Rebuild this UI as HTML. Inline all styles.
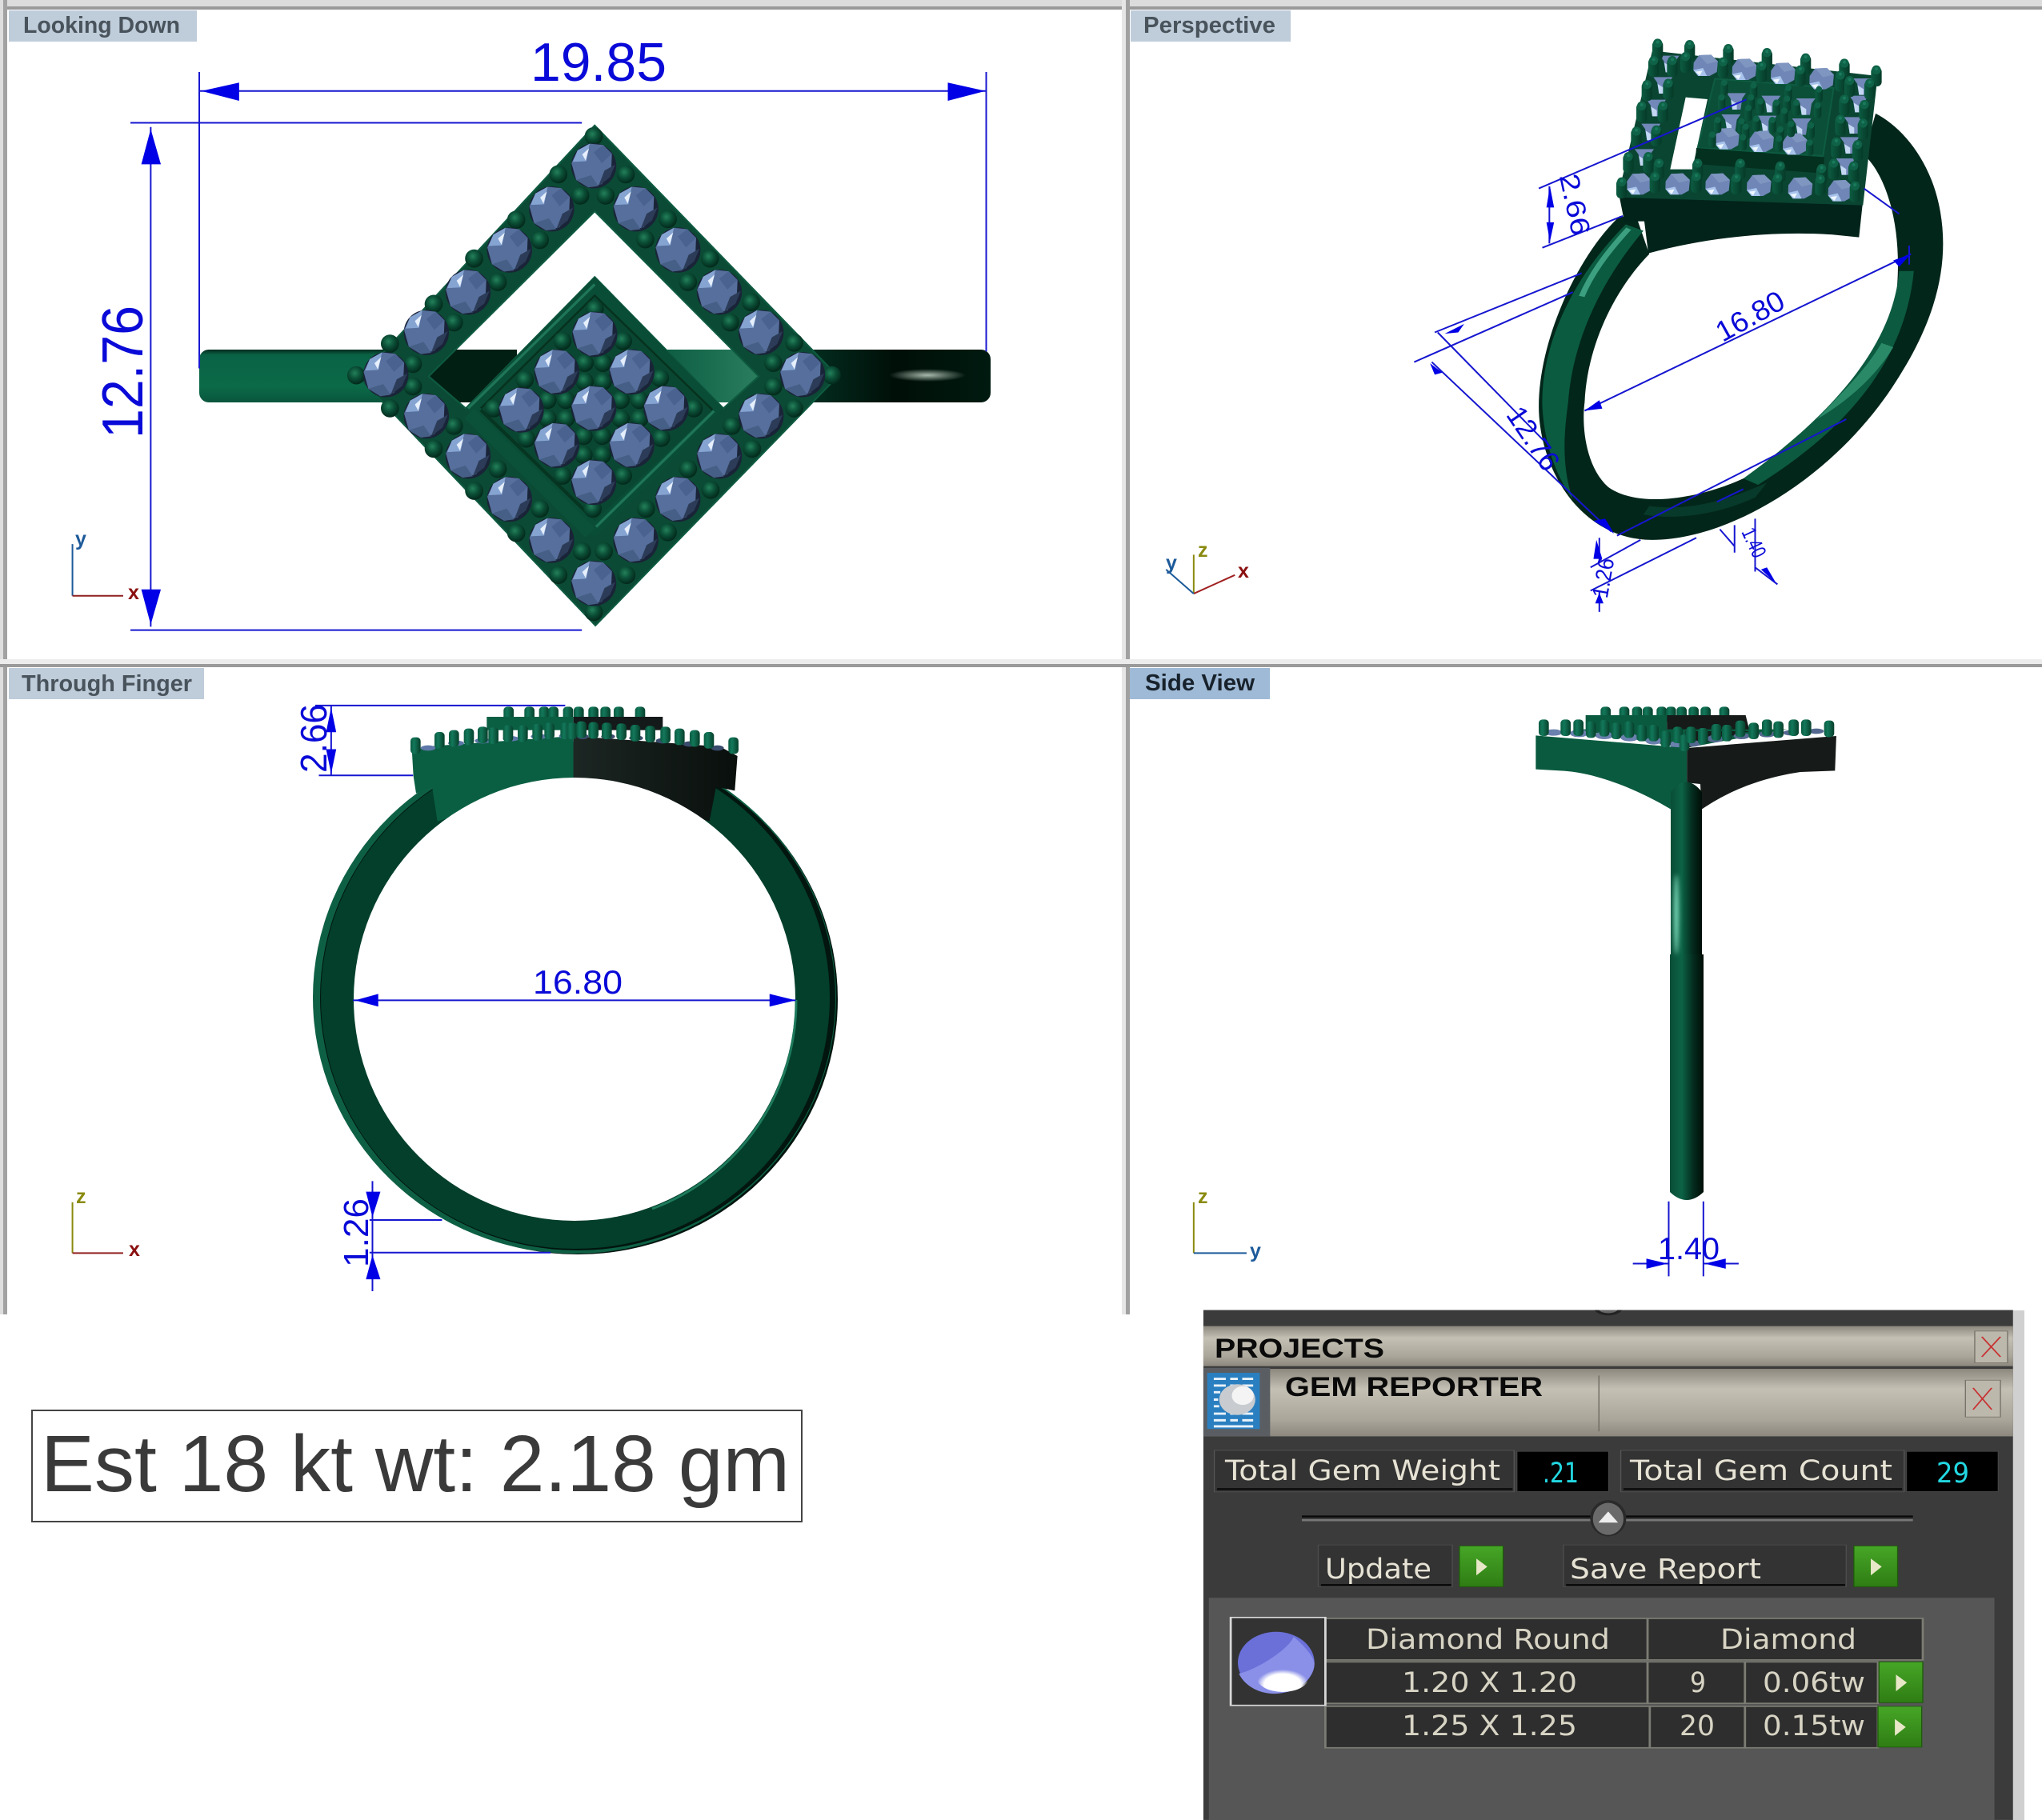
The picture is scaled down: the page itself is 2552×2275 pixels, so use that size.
<!DOCTYPE html>
<html><head><meta charset="utf-8"><title>Ring report</title>
<style>
html,body{margin:0;padding:0;background:#fff}
svg{display:block}
.d line,.d path,.d polyline{stroke:#1616d0;stroke-width:2;fill:none;vector-effect:non-scaling-stroke}
.d polygon{fill:#0000e6}
text{font-family:"Liberation Sans",sans-serif}
.dv{font-family:"DejaVu Sans","Liberation Sans",sans-serif;font-size:35px;fill:#e6e2d4}
.lb{font-weight:700;font-size:29px}
.dm{fill:#0a0ad8}
.ax{font-weight:700;font-size:25px}
</style></head><body>
<svg xmlns="http://www.w3.org/2000/svg" width="2552" height="2275" viewBox="0 0 2552 2275">
<defs>
<filter id="bl3" x="-200%" y="-20%" width="500%" height="140%"><feGaussianBlur stdDeviation="3"/></filter>
<radialGradient id="sph" cx=".42" cy=".38" r=".62"><stop offset="0" stop-color="#23805a"/><stop offset=".5" stop-color="#0b4f37"/><stop offset="1" stop-color="#03291b"/></radialGradient>
<linearGradient id="bl" x1="0" y1="0" x2="0" y2="1"><stop offset="0" stop-color="#032a1c"/><stop offset=".1" stop-color="#0a6245"/><stop offset=".7" stop-color="#0b6a48"/><stop offset="1" stop-color="#0a563c"/></linearGradient>
<linearGradient id="bh" x1="0" y1="0" x2="1" y2="0"><stop offset="0" stop-color="#0a5a40"/><stop offset="1" stop-color="#2c8060"/></linearGradient>
<linearGradient id="br" x1="0" y1="0" x2="1" y2="0"><stop offset="0" stop-color="#043022"/><stop offset=".5" stop-color="#000f08"/><stop offset="1" stop-color="#001a10"/></linearGradient>
<radialGradient id="hl"><stop offset="0" stop-color="#a8b8ac"/><stop offset="1" stop-color="#a8b8ac" stop-opacity="0"/></radialGradient>
<linearGradient id="sh" x1="0" y1="0" x2="1" y2="0"><stop offset="0" stop-color="#0a4d37"/><stop offset=".35" stop-color="#0c6346"/><stop offset=".7" stop-color="#042b1d"/><stop offset="1" stop-color="#000d07"/></linearGradient>
<linearGradient id="dk" x1="0" y1="0" x2="1" y2="0"><stop offset="0" stop-color="#1c2623"/><stop offset="1" stop-color="#090f0c"/></linearGradient>
<linearGradient id="gb" x1="0" y1="0" x2="0" y2="1"><stop offset="0" stop-color="#46a626"/><stop offset="1" stop-color="#2f7d14"/></linearGradient>
<linearGradient id="tb" x1="0" y1="0" x2="0" y2="1"><stop offset="0" stop-color="#8c887e"/><stop offset=".3" stop-color="#c4c0b4"/><stop offset=".75" stop-color="#aaa69a"/><stop offset="1" stop-color="#8c887e"/></linearGradient>
<radialGradient id="pe" cx=".5" cy=".75" r=".5"><stop offset="0" stop-color="#fff"/><stop offset=".7" stop-color="#fff"/><stop offset="1" stop-color="#fff" stop-opacity="0"/></radialGradient>
<linearGradient id="pv" x1="0" y1="0" x2="1" y2="0"><stop offset="0" stop-color="#0a5a40"/><stop offset=".35" stop-color="#13785a"/><stop offset="1" stop-color="#073f2b"/></linearGradient>
<linearGradient id="pw" x1="0" y1="0" x2="1" y2="0"><stop offset="0" stop-color="#0d5c42"/><stop offset="1" stop-color="#053a28"/></linearGradient>
<g id="gem">
<circle r="67" fill="#1a2438"/>
<polygon points="-66,-8 -48,-46 -12,-66 28,-62 54,-36 52,12 24,54 -16,64 -52,42" fill="#566f9c"/>
<polygon points="-12,-66 -48,-46 -62,-12 -22,-14" fill="#86a4d2"/>
<polygon points="-34,-34 -14,-52 -24,-16" fill="#e6effc"/>
<polygon points="28,-62 54,-36 24,-8 0,-40" fill="#4a6290"/>
<polygon points="-52,42 -16,64 14,60 -8,28" fill="#465f86"/>
<polygon points="14,60 48,34 64,-4 32,14" fill="#2c3c58"/>
</g>
<g id="pr"><circle r="27" fill="url(#sph)"/></g>
<g id="gz"><polygon points="-45,-10 -25,-38 20,-40 46,-15 42,25 15,40 -28,40 -46,18" fill="#6f86b6"/><polygon points="-25,-38 20,-40 46,-15 5,-5" fill="#7f96c0"/><polygon points="-46,18 -28,40 5,40 -10,10" fill="#a8c4ec"/><polygon points="-38,24 -22,38 -12,20" fill="#eef7ff"/></g>
<g id="gc"><polygon points="-36,-26 36,-26 22,-6 16,36 -15,36 -22,-6" fill="#7288b8"/><polygon points="-15,36 -20,0 2,14 2,36" fill="#c4d8f4"/></g>
<g id="pz"><rect x="-20" y="-18" width="40" height="72" rx="17" fill="url(#pw)"/><circle cy="-8" r="17" fill="#0f6247"/><circle cy="-12" r="6" fill="#1a7a5c"/></g>
<g id="pi"><rect x="-14" y="-12" width="28" height="56" rx="12" fill="url(#pw)"/><circle cy="-5" r="12" fill="#0f6247"/></g>
<g id="p3"><rect x="-19" y="-10" width="38" height="62" rx="14" fill="url(#pv)"/></g>
<g id="bt"><rect width="80" height="122" fill="url(#gb)"/><rect width="80" height="122" fill="none" stroke="#1f5a0c" stroke-width="2"/><polygon points="31,38 31,88 51,62" fill="#e8e8c8"/></g>
</defs>
<rect width="2552" height="2275" fill="#fff"/>

<!-- frames -->
<rect width="2552" height="8" fill="#dcdcdc"/><rect y="8" width="2552" height="4" fill="#9a9a9a"/>
<rect width="4" height="1643" fill="#dedede"/><rect x="4" width="5" height="1643" fill="#a2a2a2"/>
<rect x="1402" width="5" height="1643" fill="#e6e6e6"/><rect x="1407" width="5" height="1643" fill="#a0a0a0"/>
<rect y="824" width="2552" height="6" fill="#ececec"/><rect y="830" width="2552" height="4" fill="#9a9a9a"/>

<!-- labels -->
<rect x="11" y="13" width="235" height="39" fill="#bfccd9"/>
<text class="lb" x="29" y="41" textLength="196" lengthAdjust="spacingAndGlyphs" fill="#48535c">Looking Down</text>
<rect x="1413" y="13" width="200" height="39" fill="#bfccd9"/>
<text class="lb" x="1429" y="41" textLength="165" lengthAdjust="spacingAndGlyphs" fill="#48535c">Perspective</text>
<rect x="11" y="835" width="244" height="39" fill="#bfccd9"/>
<text class="lb" x="27" y="864" textLength="213" lengthAdjust="spacingAndGlyphs" fill="#48535c">Through Finger</text>
<rect x="1412" y="835" width="175" height="39" fill="#9fbad6"/>
<text class="lb" x="1431" y="863" textLength="137" lengthAdjust="spacingAndGlyphs" fill="#18222c">Side View</text>

<!-- PANEL 1 band -->
<rect x="249" y="437" width="300" height="66" rx="12" fill="url(#bl)"/>
<rect x="536" y="437" width="110" height="66" fill="#021f14"/>
<rect x="820" y="437" width="135" height="66" fill="url(#bh)"/>
<rect x="1000" y="437" width="238" height="66" rx="12" fill="url(#br)"/>
<ellipse cx="1159" cy="469" rx="48" ry="8" fill="url(#hl)"/>

<!-- PANEL 1 head -->
<g transform="translate(420 140) scale(.4209)">
<path fill-rule="evenodd" fill="#0b4a34" stroke="#0e5a40" stroke-width="5" d="M768 40L1490 785L770 1525L70 790ZM768 295L275 785L385 880L768 490L1150 880L1255 785Z"/>
<polygon points="768,490 1150,880 768,1265 385,880" fill="#0a4d36"/>
<polygon points="768,545 1118,885 768,1215 430,880" fill="#0a4732"/>
<path d="M392 880L768 512M1122 888L772 1232" stroke="#1f7557" stroke-width="8" fill="none"/>
<path d="M430 880L768 545L1118 885" stroke="#06321f" stroke-width="6" fill="none"/>
<path d="M430 885L750 1195" stroke="#063522" stroke-width="10" fill="none"/>
<path d="M395 895L755 1250" stroke="#0b5039" stroke-width="40" fill="none"/>
<g>
<use href="#pr" x="765" y="72"/><use href="#pr" x="660" y="185"/><use href="#pr" x="860" y="185"/><use href="#pr" x="725" y="248"/><use href="#pr" x="800" y="248"/>
<use href="#pr" x="535" y="320"/><use href="#pr" x="985" y="318"/><use href="#pr" x="605" y="380"/><use href="#pr" x="918" y="378"/>
<use href="#pr" x="410" y="435"/><use href="#pr" x="1110" y="435"/><use href="#pr" x="480" y="505"/><use href="#pr" x="1045" y="505"/>
<use href="#pr" x="290" y="570"/><use href="#pr" x="1232" y="565"/><use href="#pr" x="350" y="625"/><use href="#pr" x="1170" y="625"/>
<use href="#pr" x="160" y="688"/><use href="#pr" x="1360" y="685"/><use href="#pr" x="228" y="748"/><use href="#pr" x="1298" y="745"/>
<use href="#pr" x="60" y="782"/><use href="#pr" x="1472" y="782"/><use href="#pr" x="228" y="815"/><use href="#pr" x="1298" y="815"/>
<use href="#pr" x="160" y="880"/><use href="#pr" x="1360" y="880"/><use href="#pr" x="350" y="932"/><use href="#pr" x="1175" y="932"/>
<use href="#pr" x="290" y="1000"/><use href="#pr" x="1235" y="1000"/><use href="#pr" x="480" y="1060"/><use href="#pr" x="1045" y="1060"/>
<use href="#pr" x="410" y="1125"/><use href="#pr" x="1112" y="1122"/><use href="#pr" x="605" y="1178"/><use href="#pr" x="920" y="1178"/>
<use href="#pr" x="535" y="1250"/><use href="#pr" x="985" y="1248"/><use href="#pr" x="730" y="1305"/><use href="#pr" x="795" y="1305"/>
<use href="#pr" x="660" y="1375"/><use href="#pr" x="862" y="1375"/><use href="#pr" x="765" y="1485"/>
<use href="#pr" x="768" y="585"/><use href="#pr" x="672" y="680"/><use href="#pr" x="852" y="680"/><use href="#pr" x="738" y="745"/><use href="#pr" x="792" y="745"/>
<use href="#pr" x="560" y="795"/><use href="#pr" x="962" y="790"/><use href="#pr" x="738" y="800"/><use href="#pr" x="792" y="800"/>
<use href="#pr" x="628" y="855"/><use href="#pr" x="682" y="855"/><use href="#pr" x="845" y="855"/><use href="#pr" x="900" y="855"/>
<use href="#pr" x="468" y="880"/><use href="#pr" x="1062" y="880"/><use href="#pr" x="628" y="910"/><use href="#pr" x="682" y="910"/><use href="#pr" x="845" y="910"/><use href="#pr" x="900" y="910"/>
<use href="#pr" x="565" y="970"/><use href="#pr" x="965" y="968"/><use href="#pr" x="735" y="962"/><use href="#pr" x="790" y="962"/><use href="#pr" x="735" y="1018"/><use href="#pr" x="790" y="1018"/>
<use href="#pr" x="672" y="1080"/><use href="#pr" x="852" y="1080"/><use href="#pr" x="762" y="1178"/>
</g>
<g>
<use href="#gem" x="765" y="160"/><use href="#gem" x="640" y="288"/><use href="#gem" x="890" y="288"/><use href="#gem" x="515" y="410"/><use href="#gem" x="1015" y="410"/>
<use href="#gem" x="392" y="535"/><use href="#gem" x="1138" y="535"/><use href="#gem" x="268" y="655"/><use href="#gem" x="1262" y="655"/><use href="#gem" x="148" y="780"/><use href="#gem" x="1385" y="780"/>
<use href="#gem" x="268" y="903"/><use href="#gem" x="1262" y="903"/><use href="#gem" x="392" y="1022"/><use href="#gem" x="1138" y="1022"/><use href="#gem" x="515" y="1150"/><use href="#gem" x="1015" y="1150"/>
<use href="#gem" x="640" y="1272"/><use href="#gem" x="890" y="1272"/><use href="#gem" x="765" y="1400"/>
<use href="#gem" x="768" y="660"/><use href="#gem" x="655" y="772"/><use href="#gem" x="878" y="772"/><use href="#gem" x="550" y="885"/><use href="#gem" x="765" y="880"/><use href="#gem" x="980" y="880"/>
<use href="#gem" x="655" y="990"/><use href="#gem" x="878" y="990"/><use href="#gem" x="765" y="1100"/>
</g>
</g>

<!-- PANEL 1 dims -->
<g class="d" transform="scale(.9056 .5293)">
<path d="M275 215H1361M275 170V870M1361 170V830M180 290H803M180 1488H803M208 300V1480"/>
<polygon points="278,215 330,195 330,238"/><polygon points="1360,215 1308,195 1308,238"/>
<polygon points="208,305 195,388 222,388"/><polygon points="208,1475 195,1392 222,1392"/>
<path d="M100 1285V1407" style="stroke:#1c5a9a"/><path d="M100 1407H170" style="stroke:#902020"/>
</g>
<text class="dm" x="663" y="101" font-size="68" textLength="170" lengthAdjust="spacingAndGlyphs">19.85</text>
<text class="dm" transform="translate(178 548) rotate(-90)" font-size="72" textLength="166" lengthAdjust="spacingAndGlyphs">12.76</text>
<text class="ax" x="94" y="682" fill="#1d5a9a">y</text>
<text class="ax" x="160" y="749" fill="#8a1010">x</text>

<!-- PANEL 2 ring -->
<g transform="translate(1400 0) scale(.7347 .5293)">
<path fill-rule="evenodd" fill="#03261a" d="M850 510C780 600 712 800 712 960C712 1100 780 1275 905 1275C1040 1275 1220 1120 1320 900C1390 750 1410 620 1395 500C1380 380 1330 300 1285 268L1265 365C1315 430 1340 600 1310 780C1280 920 1170 1060 1060 1130C980 1180 880 1200 830 1150C790 1100 785 1000 790 950C795 800 850 670 900 600L880 520Z"/>
<path fill="#0b5b40" d="M860 530C780 640 715 800 718 960C722 1060 745 1130 770 1180C750 1100 755 1020 762 950C770 800 820 660 890 545Z"/>
<path d="M865 540C825 600 800 650 785 700" stroke="#3c9f80" stroke-width="10" fill="none"/>
<path fill="#0c5a40" d="M1325 640C1315 800 1230 960 1060 1130L1085 1145C1240 1010 1335 850 1350 640Z"/>
<path fill="#2a8a68" d="M1295 810C1265 880 1225 930 1185 990C1235 950 1285 890 1315 820Z"/>
<path fill="#073a2a" d="M900 1195C980 1210 1050 1170 1100 1140L1080 1175C1000 1225 930 1225 890 1215Z"/>
</g>
<!-- PANEL 2 head -->
<g transform="translate(2000 30) scale(.3333)">
<path fill="#02231a" d="M70 640L985 660L970 800L870 790C650 775 400 800 180 860L165 740L90 740Z"/>
<path fill-rule="evenodd" fill="#0a4532" d="M195 100L1040 195L985 680L65 650ZM320 275L402 282L345 545L262 545Z"/>
<polygon points="430,205 875,240 835,495 365,465" fill="#0b4f38" stroke="#0e5c42" stroke-width="6"/>
<polygon points="360,465 840,500 835,560 355,525" fill="#04301f"/>
<g>
<use href="#gc" x="260" y="145"/><use href="#gz" x="395" y="155"/><use href="#gz" x="540" y="170"/><use href="#gz" x="685" y="185"/><use href="#gz" x="830" y="205"/><use href="#gc" x="985" y="230"/>
<use href="#gc" x="235" y="225"/><use href="#gc" x="210" y="310"/><use href="#gc" x="190" y="400"/><use href="#gc" x="165" y="495"/>
<use href="#gc" x="970" y="295"/><use href="#gc" x="950" y="375"/><use href="#gc" x="935" y="450"/><use href="#gc" x="920" y="530"/>
<use href="#gc" x="510" y="285"/><use href="#gc" x="640" y="295"/><use href="#gc" x="770" y="305"/><use href="#gc" x="490" y="365"/><use href="#gc" x="625" y="370"/><use href="#gc" x="755" y="380"/><use href="#gz" x="475" y="430"/><use href="#gz" x="605" y="440"/><use href="#gz" x="730" y="450"/>
<use href="#gz" x="145" y="600"/><use href="#gz" x="290" y="600"/><use href="#gz" x="440" y="600"/><use href="#gz" x="595" y="605"/><use href="#gz" x="750" y="615"/><use href="#gz" x="900" y="625"/>
</g>
<g>
<use href="#pi" x="465" y="225"/><use href="#pi" x="575" y="235"/><use href="#pi" x="705" y="245"/><use href="#pi" x="820" y="250"/>
<use href="#pi" x="455" y="280"/><use href="#pi" x="565" y="280"/><use href="#pi" x="700" y="285"/><use href="#pi" x="600" y="295"/><use href="#pi" x="660" y="300"/><use href="#pi" x="735" y="300"/><use href="#pi" x="815" y="310"/>
<use href="#pi" x="555" y="320"/><use href="#pi" x="690" y="330"/><use href="#pi" x="440" y="365"/><use href="#pi" x="530" y="370"/><use href="#pi" x="585" y="360"/><use href="#pi" x="645" y="365"/><use href="#pi" x="715" y="380"/><use href="#pi" x="790" y="385"/><use href="#pi" x="545" y="390"/><use href="#pi" x="675" y="400"/><use href="#pi" x="420" y="420"/><use href="#pi" x="535" y="430"/><use href="#pi" x="670" y="435"/><use href="#pi" x="785" y="450"/>
<use href="#pz" x="215" y="80"/><use href="#pz" x="335" y="85"/><use href="#pz" x="480" y="100"/><use href="#pz" x="625" y="115"/><use href="#pz" x="770" y="135"/><use href="#pz" x="915" y="155"/><use href="#pz" x="1035" y="180"/>
<use href="#pz" x="200" y="145"/><use href="#pz" x="270" y="145"/><use href="#pz" x="320" y="130"/><use href="#pz" x="460" y="150"/><use href="#pz" x="605" y="165"/><use href="#pz" x="750" y="180"/><use href="#pz" x="900" y="200"/>
<use href="#pz" x="935" y="220"/><use href="#pz" x="1010" y="230"/><use href="#pz" x="175" y="235"/><use href="#pz" x="255" y="230"/><use href="#pz" x="915" y="290"/><use href="#pz" x="990" y="310"/>
<use href="#pz" x="155" y="315"/><use href="#pz" x="235" y="315"/><use href="#pz" x="900" y="365"/><use href="#pz" x="985" y="380"/><use href="#pz" x="135" y="410"/><use href="#pz" x="210" y="405"/>
<use href="#pz" x="885" y="450"/><use href="#pz" x="965" y="460"/><use href="#pz" x="105" y="505"/><use href="#pz" x="180" y="505"/><use href="#pz" x="220" y="530"/>
<use href="#pz" x="365" y="530"/><use href="#pz" x="525" y="530"/><use href="#pz" x="675" y="540"/><use href="#pz" x="830" y="550"/><use href="#pz" x="875" y="530"/><use href="#pz" x="950" y="540"/>
<use href="#pz" x="80" y="600"/><use href="#pz" x="205" y="580"/><use href="#pz" x="360" y="580"/><use href="#pz" x="510" y="585"/><use href="#pz" x="665" y="585"/><use href="#pz" x="825" y="590"/><use href="#pz" x="955" y="615"/>
</g>
</g>
<g class="d" transform="translate(1400 0) scale(.7347 .5293)">
<path d="M712 445L1065 235M718 585L855 510M730 440V575M1265 445L1325 505"/>
<path d="M535 785L785 645M500 855L770 690M540 785L720 1040M530 855L835 1255"/>
<path d="M790 970L1345 600M1342 580V625"/>
<path d="M845 1265L1235 990M800 1395L980 1270M800 1340L885 1275M1015 1185L1060 1155M815 1270V1330M815 1395V1445M1045 1240V1305M1080 1225V1350M1080 1340L1118 1380M1020 1250L1045 1290"/>
<polygon points="725,490 738,490 731,440"/><polygon points="725,525 738,525 731,570"/>
<polygon points="552,788 585,765 575,785"/><polygon points="527,858 548,880 535,885"/>
<polygon points="790,970 815,945 820,965"/><polygon points="1345,600 1315,615 1325,630"/>
<polygon points="840,1260 805,1230 825,1225"/><polygon points="810,1275 820,1320 805,1320"/><polygon points="815,1400 808,1425 822,1425"/><polygon points="1116,1378 1090,1345 1100,1340"/>
<path d="M125 1402V1310" style="stroke:#8a8a10"/><path d="M125 1402L195 1358" style="stroke:#a02020"/><path d="M125 1402L78 1345" style="stroke:#1c5a9a"/>
</g>
<text class="dm" transform="translate(1957 258) rotate(78)" text-anchor="middle" font-size="34" textLength="78" lengthAdjust="spacingAndGlyphs">2.66</text>
<text class="dm" transform="translate(1906 555) rotate(56)" text-anchor="middle" font-size="36" textLength="88" lengthAdjust="spacingAndGlyphs">12.76</text>
<text class="dm" transform="translate(2193 406) rotate(-29)" text-anchor="middle" font-size="36" textLength="92" lengthAdjust="spacingAndGlyphs">16.80</text>
<text class="dm" transform="translate(2013 724) rotate(-80)" text-anchor="middle" font-size="28" textLength="50" lengthAdjust="spacingAndGlyphs">1.26</text>
<text class="dm" transform="translate(2184 682) rotate(65)" text-anchor="middle" font-size="26" textLength="38" lengthAdjust="spacingAndGlyphs">1.40</text>
<text class="ax" x="1497" y="696" fill="#8a8a10">z</text>
<text class="ax" x="1547" y="722" fill="#8a1010">x</text>
<text class="ax" x="1457" y="712" fill="#1d5a9a">y</text>

<!-- PANEL 3 ring -->
<ellipse cx="722" cy="1249" rx="325" ry="319" fill="#01150d"/>
<ellipse cx="718" cy="1247" rx="327" ry="320" fill="#0e6045"/>
<ellipse cx="722" cy="1247" rx="322" ry="316" fill="#02150e"/>
<ellipse cx="719" cy="1247" rx="318" ry="314" fill="#033f2b"/>
<!-- PANEL 3 head -->
<g transform="translate(490 870) scale(.3333)">
<use href="#p3" x="437" y="50"/><use href="#p3" x="515" y="50"/><use href="#p3" x="570" y="50"/><use href="#p3" x="605" y="50"/><use href="#p3" x="660" y="50"/><use href="#p3" x="700" y="50"/><use href="#p3" x="755" y="50"/><use href="#p3" x="800" y="50"/><use href="#p3" x="850" y="50"/><use href="#p3" x="930" y="50"/>
<rect x="355" y="78" width="325" height="50" fill="#0a5f43"/><rect x="680" y="78" width="335" height="50" fill="#14191a"/>
<polygon points="75,215 120,190 680,150 680,320 170,470 150,340 90,365 80,300" fill="#0a5f43"/>
<polygon points="680,150 1230,190 1295,225 1285,355 1215,340 1190,470 680,320" fill="url(#dk)"/>
<g fill="#5f78aa"><ellipse cx="135" cy="195" rx="28" ry="10"/><ellipse cx="240" cy="177" rx="30" ry="10"/><ellipse cx="340" cy="168" rx="30" ry="10"/><ellipse cx="445" cy="160" rx="30" ry="10"/><ellipse cx="550" cy="152" rx="30" ry="10"/><ellipse cx="650" cy="150" rx="24" ry="10"/></g>
<g fill="#3a4c6c"><ellipse cx="715" cy="152" rx="22" ry="10"/><ellipse cx="810" cy="152" rx="26" ry="10"/><ellipse cx="915" cy="158" rx="26" ry="10"/><ellipse cx="1015" cy="168" rx="26" ry="10"/><ellipse cx="1115" cy="180" rx="24" ry="10"/><ellipse cx="1220" cy="195" rx="24" ry="10"/></g>
<use href="#p3" x="88" y="165"/><use href="#p3" x="178" y="145"/><use href="#p3" x="232" y="138"/><use href="#p3" x="288" y="132"/><use href="#p3" x="340" y="125"/><use href="#p3" x="380" y="128"/><use href="#p3" x="435" y="120"/><use href="#p3" x="490" y="120"/><use href="#p3" x="545" y="115"/><use href="#p3" x="590" y="110"/><use href="#p3" x="650" y="110"/><use href="#p3" x="675" y="110"/><use href="#p3" x="710" y="105"/><use href="#p3" x="755" y="108"/><use href="#p3" x="805" y="110"/><use href="#p3" x="860" y="113"/><use href="#p3" x="912" y="118"/><use href="#p3" x="968" y="122"/><use href="#p3" x="1025" y="125"/><use href="#p3" x="1078" y="132"/><use href="#p3" x="1135" y="138"/><use href="#p3" x="1188" y="145"/><use href="#p3" x="1280" y="165"/>
</g>
<ellipse cx="718" cy="1249" rx="276" ry="277" fill="#fff"/>
<path d="M995 1250A277 277 0 0 1 815 1511" fill="none" stroke="#1e7a5c" stroke-width="3"/>
<g class="d" transform="translate(0 820) scale(.9056 .5293)">
<path d="M435 117H780M440 282H570M457 117V282M487 813H1098M514 1240V1500M510 1332H610M510 1409H760"/>
<polygon points="457,122 450,180 464,180"/><polygon points="457,278 450,220 464,220"/>
<polygon points="490,813 522,798 522,828"/><polygon points="1098,813 1062,798 1062,828"/>
<polygon points="514,1325 505,1265 525,1265"/><polygon points="514,1415 505,1472 525,1472"/>
<path d="M100 1290V1410" style="stroke:#8a8a10"/><path d="M100 1410H170" style="stroke:#902020"/>
</g>
<text class="dm" transform="translate(408 966) rotate(-90)" font-size="46" textLength="86" lengthAdjust="spacingAndGlyphs">2.66</text>
<text class="dm" x="666" y="1242" font-size="42" textLength="112" lengthAdjust="spacingAndGlyphs">16.80</text>
<text class="dm" transform="translate(460 1584) rotate(-90)" font-size="44" textLength="86" lengthAdjust="spacingAndGlyphs">1.26</text>
<text class="ax" x="95" y="1504" fill="#8a8a10">z</text>
<text class="ax" x="161" y="1570" fill="#8a1010">x</text>

<!-- PANEL 4 -->
<g transform="translate(1900 870) scale(.3333)">
<use href="#p3" x="320" y="50"/><use href="#p3" x="390" y="50"/><use href="#p3" x="438" y="50"/><use href="#p3" x="478" y="50"/><use href="#p3" x="530" y="50"/><use href="#p3" x="565" y="50"/><use href="#p3" x="605" y="50"/><use href="#p3" x="650" y="50"/><use href="#p3" x="695" y="50"/><use href="#p3" x="765" y="50"/>
<rect x="245" y="72" width="305" height="60" fill="#0a5a3f"/><polygon points="550,72 845,72 860,132 550,132" fill="#161a18"/>
<polygon points="200,125 620,195 1000,125" fill="#0a5a3f"/><polygon points="620,195 860,132 620,132" fill="#161a18"/>
<g fill="#6a80ae"><ellipse cx="125" cy="137" rx="32" ry="12"/><ellipse cx="220" cy="140" rx="34" ry="14"/><ellipse cx="315" cy="148" rx="34" ry="14"/><ellipse cx="410" cy="156" rx="34" ry="14"/><ellipse cx="500" cy="168" rx="30" ry="14"/><ellipse cx="590" cy="182" rx="30" ry="14"/></g>
<g fill="#54688f"><ellipse cx="650" cy="178" rx="26" ry="12"/><ellipse cx="730" cy="160" rx="30" ry="14"/><ellipse cx="830" cy="150" rx="30" ry="12"/><ellipse cx="925" cy="143" rx="30" ry="12"/><ellipse cx="1015" cy="138" rx="30" ry="10"/><ellipse cx="1110" cy="132" rx="28" ry="10"/></g>
<path fill="#0a5a3f" d="M58 148L625 195V325L565 425C440 350 280 285 150 280L58 275Z"/>
<path fill="#161a18" d="M625 195L1185 150L1180 280L1050 285C880 310 760 370 680 425L675 330L625 325Z"/>
<use href="#p3" x="88" y="98"/><use href="#p3" x="170" y="98"/><use href="#p3" x="218" y="98"/><use href="#p3" x="265" y="105"/><use href="#p3" x="315" y="100"/><use href="#p3" x="360" y="110"/><use href="#p3" x="408" y="105"/><use href="#p3" x="455" y="118"/><use href="#p3" x="500" y="118"/><use href="#p3" x="545" y="140"/><use href="#p3" x="590" y="125"/><use href="#p3" x="615" y="155"/><use href="#p3" x="640" y="125"/><use href="#p3" x="685" y="130"/><use href="#p3" x="735" y="115"/><use href="#p3" x="775" y="118"/><use href="#p3" x="825" y="102"/><use href="#p3" x="875" y="110"/><use href="#p3" x="925" y="98"/><use href="#p3" x="968" y="105"/><use href="#p3" x="1025" y="98"/><use href="#p3" x="1072" y="98"/><use href="#p3" x="1158" y="102"/>
</g>
<path fill="url(#sh)" d="M2088 1193V990Q2107 965 2127 990V1193Z"/>
<path fill="url(#sh)" d="M2087 1193H2129V1490Q2108 1510 2087 1490Z"/>
<ellipse cx="2095" cy="1143" rx="3" ry="50" fill="#7fe0c0" filter="url(#bl3)"/>
<g class="d" transform="translate(1400 820) scale(.7347 .5293)">
<path d="M933 1288V1465M992 1288V1465M872 1435H932M993 1435H1052"/>
<polygon points="931,1435 895,1423 895,1447"/><polygon points="994,1435 1030,1423 1030,1447"/>
<path d="M125 1290V1410" style="stroke:#8a8a10"/><path d="M125 1410H215" style="stroke:#1c5a9a"/>
</g>
<text class="dm" x="2072" y="1574" font-size="39" textLength="77" lengthAdjust="spacingAndGlyphs">1.40</text>
<text class="ax" x="1497" y="1504" fill="#8a8a10">z</text>
<text class="ax" x="1562" y="1572" fill="#1d5a9a">y</text>

<!-- EST BOX -->
<rect x="40" y="1763" width="962" height="139" fill="#fff" stroke="#444" stroke-width="2"/>
<text x="51" y="1864" font-size="100" fill="#3a3a3a" textLength="936" lengthAdjust="spacingAndGlyphs">Est 18 kt wt: 2.18 gm</text>

<!-- BOTTOM PANEL -->
<rect x="2516" y="1638" width="14" height="637" fill="#d0d0d0"/>
<g transform="translate(1480 1620) scale(.6837 .4177)">
<rect x="35" y="42" width="1480" height="1526" fill="#3b3b3b"/>
<path d="M750 42A26 22 0 0 0 800 42Z" fill="#222"/><path d="M758 42A18 14 0 0 0 792 42Z" fill="#666"/>
<rect x="35" y="90" width="1480" height="120" fill="url(#tb)"/>
<rect x="1445" y="105" width="60" height="95" fill="#bcb8ac" stroke="#77736a" stroke-width="2"/>
<path d="M1458 122L1492 182M1492 122L1458 182" stroke="#c83030" stroke-width="3" fill="none"/>
<rect x="35" y="218" width="1480" height="202" fill="url(#tb)"/>
<rect x="35" y="215" width="122" height="205" fill="#5a5e62"/>
<rect x="42" y="230" width="96" height="168" fill="#2a7fc0"/>
<path stroke="#e8f2fa" stroke-width="7" fill="none" d="M54 248h22M84 248h14M106 248h20M54 268h22M84 268h14M106 268h20M54 288h12M54 310h8M54 330h10M54 352h22M84 352h14M106 352h20M54 372h22M84 372h14M106 372h20M54 390h72"/>
<ellipse cx="97" cy="310" rx="33" ry="46" fill="#c8ccd0"/>
<ellipse cx="107" cy="298" rx="20" ry="28" fill="#f4f4f4"/>
<path d="M758 238V405" stroke="#6e6a60" stroke-width="2"/>
<rect x="1428" y="252" width="64" height="110" fill="#bcb8ac" stroke="#77736a" stroke-width="2"/>
<path d="M1442 275L1476 340M1476 275L1442 340" stroke="#c83030" stroke-width="3" fill="none"/>

<rect x="55" y="462" width="548" height="124" fill="#333" stroke="#555" stroke-width="2"/><path d="M60 578H600" stroke="#0c0c0c" stroke-width="6"/>
<rect x="608" y="465" width="168" height="120" fill="#000" stroke="#444" stroke-width="2"/>
<rect x="798" y="462" width="518" height="124" fill="#333" stroke="#555" stroke-width="2"/><path d="M803 578H1312" stroke="#0c0c0c" stroke-width="6"/>
<rect x="1320" y="465" width="168" height="120" fill="#000" stroke="#444" stroke-width="2"/>

<path d="M215 660H1332" stroke="#0a0a0a" stroke-width="6"/><path d="M215 671H1332" stroke="#777" stroke-width="6"/>
<ellipse cx="775" cy="665" rx="33" ry="54" fill="#2a2a2a"/><ellipse cx="775" cy="667" rx="28" ry="48" fill="#6a6a6a"/>
<polygon points="775,645 757,678 793,678" fill="#eee"/>

<rect x="245" y="745" width="245" height="125" fill="#333" stroke="#4d4d4d" stroke-width="2"/><path d="M250 865H488" stroke="#0c0c0c" stroke-width="6"/>
<use href="#bt" x="503" y="748"/>
<rect x="693" y="745" width="517" height="125" fill="#333" stroke="#4d4d4d" stroke-width="2"/><path d="M698 865H1208" stroke="#0c0c0c" stroke-width="6"/>
<use href="#bt" x="1224" y="748"/>

<rect x="45" y="903" width="1436" height="665" fill="#565656"/>
<g fill="#2e2e2e" stroke="#7c7c74" stroke-width="4">
<rect x="258" y="965" width="589" height="124"/><rect x="847" y="965" width="503" height="124"/>
<rect x="258" y="1095" width="589" height="124"/><rect x="847" y="1095" width="178" height="124"/><rect x="1025" y="1095" width="243" height="124"/>
<rect x="258" y="1228" width="593" height="124"/><rect x="851" y="1228" width="174" height="124"/><rect x="1025" y="1228" width="243" height="124"/>
</g>
<use href="#bt" x="1270" y="1095"/><use href="#bt" x="1268" y="1228"/>
<rect x="85" y="962" width="173" height="263" fill="#333" stroke="#d8d8d8" stroke-width="4"/>
<ellipse cx="168" cy="1097" rx="70" ry="92" fill="#6a70d8"/>
<path d="M100 1130C130 1120 190 1060 200 1020C215 1040 238 1080 238 1100C238 1150 200 1190 165 1190C135 1190 110 1165 100 1130Z" fill="#8a90e8"/>
<ellipse cx="180" cy="1140" rx="48" ry="45" fill="url(#pe)"/>
</g>
<text class="lb" x="1518" y="1697" style="font-size:34px" textLength="212" lengthAdjust="spacingAndGlyphs" fill="#0a0a0a">PROJECTS</text>
<text class="lb" x="1606" y="1745" style="font-size:34px" textLength="322" lengthAdjust="spacingAndGlyphs" fill="#0a0a0a">GEM REPORTER</text>
<text class="dv" x="1531" y="1850" textLength="344" lengthAdjust="spacingAndGlyphs">Total Gem Weight</text>
<text class="dv" x="1928" y="1853" textLength="45" lengthAdjust="spacingAndGlyphs" style="fill:#22d8e2">.21</text>
<text class="dv" x="2037" y="1850" textLength="328" lengthAdjust="spacingAndGlyphs">Total Gem Count</text>
<text class="dv" x="2420" y="1853" textLength="41" lengthAdjust="spacingAndGlyphs" style="fill:#22d8e2">29</text>
<text class="dv" x="1656" y="1973" textLength="133" lengthAdjust="spacingAndGlyphs">Update</text>
<text class="dv" x="1962" y="1973" textLength="239" lengthAdjust="spacingAndGlyphs">Save Report</text>
<text class="dv" x="1707" y="2061" textLength="305" lengthAdjust="spacingAndGlyphs" style="fill:#d8d4c4">Diamond Round</text>
<text class="dv" x="2150" y="2061" textLength="170" lengthAdjust="spacingAndGlyphs" style="fill:#d8d4c4">Diamond</text>
<text class="dv" x="1752" y="2115" textLength="219" lengthAdjust="spacingAndGlyphs" style="fill:#d8d4c4">1.20 X 1.20</text>
<text class="dv" x="2112" y="2115" textLength="20" lengthAdjust="spacingAndGlyphs" style="fill:#d8d4c4">9</text>
<text class="dv" x="2203" y="2115" textLength="128" lengthAdjust="spacingAndGlyphs" style="fill:#d8d4c4">0.06tw</text>
<text class="dv" x="1752" y="2169" textLength="219" lengthAdjust="spacingAndGlyphs" style="fill:#d8d4c4">1.25 X 1.25</text>
<text class="dv" x="2099" y="2169" textLength="44" lengthAdjust="spacingAndGlyphs" style="fill:#d8d4c4">20</text>
<text class="dv" x="2203" y="2169" textLength="128" lengthAdjust="spacingAndGlyphs" style="fill:#d8d4c4">0.15tw</text>
</svg>
</body></html>
